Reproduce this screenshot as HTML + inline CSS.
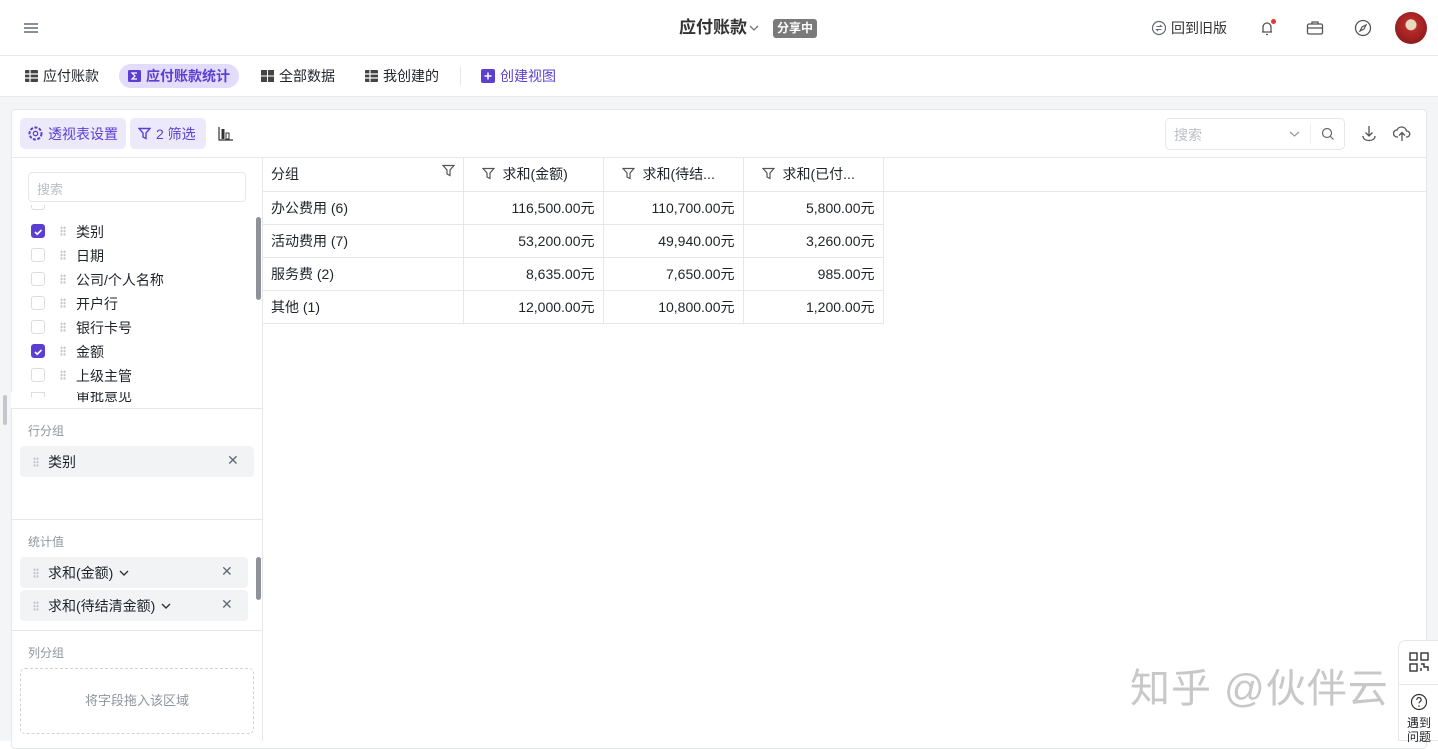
<!DOCTYPE html>
<html><head><meta charset="utf-8"><style>
*{box-sizing:border-box;margin:0;padding:0}
body{width:1438px;height:741px;overflow:hidden;background:#fff;font-family:"Liberation Sans","Noto Sans CJK SC",sans-serif;color:#1f2329;font-size:14px;position:relative}
.abs{position:absolute}
.top{left:0;top:0;width:1438px;height:56px;border-bottom:1px solid #e8e9eb;background:#fff}
.tabs{left:0;top:56px;width:1438px;height:41px;border-bottom:1px solid #e8e9eb;background:#fff}
.tab{position:absolute;top:8px;height:24px;line-height:24px;font-size:14px;color:#1f2329;display:flex;align-items:center;gap:5px}
.gray{left:0;top:97px;width:1438px;height:644px;background:#f4f5f7}
.card{left:11px;top:109px;width:1416px;height:640px;background:#fff;border:1px solid #e6e7ea;border-radius:4px}
.btn{position:absolute;top:118px;height:31px;border-radius:5px;background:#ece9fb;color:#5b3fd1;font-size:14px;display:flex;align-items:center;padding:0 8px;gap:5px}
.cb{position:absolute;left:31px;width:14px;height:14px;border:1px solid #dcdde0;border-radius:3px;background:#fff}
.cb.on{background:#5b3fd1;border-color:#5b3fd1}
.fl{position:absolute;left:76px;font-size:14px}
.dots{position:absolute;left:60px;width:6px;height:10px;background-image:radial-gradient(#c4c6cc 1px,transparent 1.2px);background-size:3px 3.4px}
.sec{position:absolute;left:28px;font-size:12px;color:#8f959e}
.chip{position:absolute;left:20px;height:31px;background:#f2f3f5;border-radius:4px;font-size:14px;display:flex;align-items:center;padding-left:28px}
.x{position:absolute;color:#646a73;font-size:14px}
table{border-collapse:collapse;position:absolute;left:263px;top:158px}
td{height:33px;border-right:1px solid #e6e7ea;border-bottom:1px solid #e6e7ea;padding:0 8px;font-size:14px}
td.n{text-align:right}
</style></head><body>
<div class="abs top"></div>
<svg class="abs" style="left:23px;top:21px" width="16" height="14"><path d="M1 3h14M1 7h14M1 11h14" stroke="#646a73" stroke-width="1.5"/></svg>
<div class="abs" style="left:679px;top:17px;font-size:17px;font-weight:bold;color:#333;line-height:22px">应付账款</div>
<svg class="abs" style="left:749px;top:24px" width="10" height="8"><path d="M1 2l4 4 4-4" stroke="#777" fill="none" stroke-width="1.3"/></svg>
<div class="abs" style="left:773px;top:19px;width:44px;height:19px;background:#7a7a7a;border-radius:3px;color:#fff;font-size:12px;line-height:19px;text-align:center;font-weight:bold">分享中</div>
<svg class="abs" style="left:1151px;top:20px" width="16" height="16"><circle cx="8" cy="8" r="6.5" stroke="#646a73" fill="none" stroke-width="1.2"/><path d="M5.5 6.5h5l-1.5-1.5M10.5 9.5h-5l1.5 1.5" stroke="#646a73" fill="none" stroke-width="1"/></svg>
<div class="abs" style="left:1171px;top:18px;font-size:14px;color:#333">回到旧版</div>
<svg class="abs" style="left:1258px;top:18px" width="20" height="20"><path d="M4 14h10M5 14V9a4 4 0 018 0v5M8 16.5h2" stroke="#555" fill="none" stroke-width="1.3"/><circle cx="15.5" cy="3.5" r="2.5" fill="#e33"/></svg>
<svg class="abs" style="left:1306px;top:20px" width="18" height="16"><rect x="1.5" y="4" width="15" height="10" rx="1.5" stroke="#555" fill="none" stroke-width="1.3"/><path d="M6 4V2h6v2M1.5 8h15" stroke="#555" fill="none" stroke-width="1.3"/></svg>
<svg class="abs" style="left:1354px;top:19px" width="18" height="18"><circle cx="9" cy="9" r="7.5" stroke="#555" fill="none" stroke-width="1.3"/><path d="M12 6l-2 4-4 2 2-4z" stroke="#555" fill="none" stroke-width="1.2"/></svg>
<div class="abs" style="left:1395px;top:12px;width:32px;height:32px;border-radius:50%;background:radial-gradient(circle at 50% 40%,#e9d9c0 0 5px,#b82a2a 6px,#7a1515)"></div>

<div class="abs tabs"></div>
<div class="tab" style="left:25px;top:64px"><svg width="13" height="12"><rect width="13" height="12" rx="1" fill="#444"/><path d="M5 0v12M0 4h13M0 8h13" stroke="#fff" stroke-width="1.2"/></svg>应付账款</div>
<div class="tab" style="left:119px;top:64px;background:#e3dcfb;border-radius:12px;padding:0 9px;color:#5b3fd1;font-weight:bold"><svg width="13" height="12"><rect width="13" height="12" rx="1.5" fill="#5b3fd1"/><path d="M9 3H4l3 3-3 3h5" stroke="#fff" fill="none" stroke-width="1.2"/></svg>应付账款统计</div>
<div class="tab" style="left:261px;top:64px"><svg width="13" height="12"><rect width="6" height="5.5" fill="#444"/><rect x="7" width="6" height="5.5" fill="#444"/><rect y="6.5" width="6" height="5.5" fill="#444"/><rect x="7" y="6.5" width="6" height="5.5" fill="#444"/></svg>全部数据</div>
<div class="tab" style="left:365px;top:64px"><svg width="13" height="12"><rect width="13" height="12" rx="1" fill="#444"/><path d="M5 0v12M0 4h13M0 8h13" stroke="#fff" stroke-width="1.2"/></svg>我创建的</div>
<div class="abs" style="left:460px;top:66px;width:1px;height:20px;background:#e6e7ea"></div>
<div class="tab" style="left:481px;top:64px;color:#5b3fd1"><svg width="14" height="14"><rect width="14" height="14" rx="2" fill="#5b3fd1"/><path d="M7 3.5v7M3.5 7h7" stroke="#fff" stroke-width="1.5"/></svg>创建视图</div>

<div class="abs gray"></div>
<div class="abs card"></div>
<div class="btn" style="left:20px;width:106px"><svg width="15" height="15"><circle cx="7.5" cy="7.5" r="6" stroke="#5b3fd1" fill="none" stroke-width="2" stroke-dasharray="3 1.5"/><circle cx="7.5" cy="7.5" r="2.2" stroke="#5b3fd1" fill="none" stroke-width="1.3"/></svg>透视表设置</div>
<div class="btn" style="left:130px;width:76px"><svg width="13" height="13"><path d="M1 1.5h11L8 6v5.5L5 10V6z" stroke="#5b3fd1" fill="none" stroke-width="1.4"/></svg>2 筛选</div>
<svg class="abs" style="left:218px;top:126px" width="16" height="15"><path d="M1 1v13h14" stroke="#333" fill="none" stroke-width="1.2"/><rect x="3.5" y="3" width="3" height="10" fill="#333"/><rect x="8" y="7" width="3" height="6" stroke="#333" fill="none"/></svg>
<div class="abs" style="left:1165px;top:118px;width:180px;height:32px;border:1px solid #e6e7ea;border-radius:5px"></div>
<div class="abs" style="left:1174px;top:125px;color:#bbbfc4;font-size:14px">搜索</div>
<svg class="abs" style="left:1289px;top:130px" width="11" height="8"><path d="M1 2l4.5 4L10 2" stroke="#999" fill="none" stroke-width="1.2"/></svg>
<div class="abs" style="left:1310px;top:124px;width:1px;height:20px;background:#eee"></div>
<svg class="abs" style="left:1321px;top:127px" width="14" height="14"><circle cx="6" cy="6" r="4.5" stroke="#666" fill="none" stroke-width="1.2"/><path d="M9.5 9.5l3 3" stroke="#666" stroke-width="1.2"/></svg>
<svg class="abs" style="left:1361px;top:125px" width="16" height="17"><path d="M8 1v10M4.5 7.5L8 11l3.5-3.5M2 11c0 3 2.5 4.5 6 4.5s6-1.5 6-4.5" stroke="#555" fill="none" stroke-width="1.3"/></svg>
<svg class="abs" style="left:1393px;top:125px" width="18" height="17"><path d="M5 12H4a3.5 3.5 0 010-7 5 5 0 019.5 1A3 3 0 0114 12h-1M9 16V8M6 10.5L9 7.5l3 3" stroke="#555" fill="none" stroke-width="1.3"/></svg>
<div class="abs" style="left:11px;top:157px;width:1416px;height:1px;background:#e6e7ea"></div>

<div class="abs" style="left:262px;top:157px;width:1px;height:584px;background:#e6e7ea"></div>
<div class="abs" style="left:28px;top:172px;width:218px;height:30px;border:1px solid #e6e7ea;border-radius:4px;color:#bbbfc4;font-size:13px;padding:6px 8px">搜索</div>
<div class="abs" style="left:256px;top:217px;width:5px;height:83px;background:#8f9399;border-radius:3px"></div>
<div class="abs" style="left:3px;top:395px;width:4px;height:30px;background:#c4c6cc;border-radius:2px"></div>
<div class="cb" style="top:205px;height:5px;border-top:none;border-radius:0 0 3px 3px"></div>
<div class="cb on" style="top:224px"><svg width="12" height="12"><path d="M3 6l2.2 2.2L9.5 4" stroke="#fff" fill="none" stroke-width="1.6"/></svg></div><div class="dots" style="top:226px"></div><div class="fl" style="top:222px">类别</div>
<div class="cb" style="top:248px"></div><div class="dots" style="top:250px"></div><div class="fl" style="top:246px">日期</div>
<div class="cb" style="top:272px"></div><div class="dots" style="top:274px"></div><div class="fl" style="top:270px">公司/个人名称</div>
<div class="cb" style="top:296px"></div><div class="dots" style="top:298px"></div><div class="fl" style="top:294px">开户行</div>
<div class="cb" style="top:320px"></div><div class="dots" style="top:322px"></div><div class="fl" style="top:318px">银行卡号</div>
<div class="cb on" style="top:344px"><svg width="12" height="12"><path d="M3 6l2.2 2.2L9.5 4" stroke="#fff" fill="none" stroke-width="1.6"/></svg></div><div class="dots" style="top:346px"></div><div class="fl" style="top:342px">金额</div>
<div class="cb" style="top:368px"></div><div class="dots" style="top:370px"></div><div class="fl" style="top:366px">上级主管</div>
<div class="abs" style="left:11px;top:392px;width:251px;height:16px;overflow:hidden;background:#fff"><div style="position:absolute;left:20px;top:0;width:14px;height:5px;border:1px solid #dcdde0;border-bottom:none"></div><div style="position:absolute;left:65px;top:-6px;font-size:14px">审批意见</div></div>
<div class="abs" style="left:11px;top:408px;width:251px;height:1px;background:#e6e7ea"></div>
<div class="sec" style="top:422px">行分组</div>
<div class="chip" style="top:446px;width:234px"><div class="dots" style="left:13px;top:11px"></div>类别<span class="x" style="left:207px;top:6px">✕</span></div>
<div class="abs" style="left:11px;top:519px;width:251px;height:1px;background:#e6e7ea"></div>
<div class="sec" style="top:533px">统计值</div>
<div class="abs" style="left:256px;top:557px;width:5px;height:43px;background:#8f9399;border-radius:3px"></div>
<div class="chip" style="top:557px;width:228px"><div class="dots" style="left:13px;top:11px"></div>求和(金额) <svg style="margin-left:6px" width="10" height="8"><path d="M1 2l4 4 4-4" stroke="#333" fill="none" stroke-width="1.4"/></svg><span class="x" style="left:201px;top:6px">✕</span></div>
<div class="chip" style="top:590px;width:228px"><div class="dots" style="left:13px;top:11px"></div>求和(待结清金额) <svg style="margin-left:6px" width="10" height="8"><path d="M1 2l4 4 4-4" stroke="#333" fill="none" stroke-width="1.4"/></svg><span class="x" style="left:201px;top:6px">✕</span></div>
<div class="abs" style="left:11px;top:630px;width:251px;height:1px;background:#e6e7ea"></div>
<div class="sec" style="top:644px">列分组</div>
<div class="abs" style="left:20px;top:668px;width:234px;height:66px;border:1px dashed #d0d3d6;border-radius:5px;text-align:center;line-height:64px;color:#8f959e;font-size:13px">将字段拖入该区域</div>

<div class="abs" style="left:263px;top:158px;width:1164px;height:34px;border-bottom:1px solid #e6e7ea"></div>
<table>
<tr><td style="width:200px;height:33px">分组<svg style="float:right" width="13" height="13"><path d="M1 1.5h11L8 6v5.5L5 10V6z" stroke="#555" fill="none" stroke-width="1.2"/></svg></td>
<td style="width:140px;padding-left:18px"><svg width="13" height="13" style="vertical-align:-1px;margin-right:8px"><path d="M1 1.5h11L8 6v5.5L5 10V6z" stroke="#555" fill="none" stroke-width="1.2"/></svg>求和(金额)</td>
<td style="width:140px;padding-left:18px"><svg width="13" height="13" style="vertical-align:-1px;margin-right:8px"><path d="M1 1.5h11L8 6v5.5L5 10V6z" stroke="#555" fill="none" stroke-width="1.2"/></svg>求和(待结...</td>
<td style="width:140px;padding-left:18px"><svg width="13" height="13" style="vertical-align:-1px;margin-right:8px"><path d="M1 1.5h11L8 6v5.5L5 10V6z" stroke="#555" fill="none" stroke-width="1.2"/></svg>求和(已付...</td></tr>
<tr><td style="height:32px">办公费用 (6)</td><td class="n">116,500.00元</td><td class="n">110,700.00元</td><td class="n">5,800.00元</td></tr>
<tr><td style="height:32px">活动费用 (7)</td><td class="n">53,200.00元</td><td class="n">49,940.00元</td><td class="n">3,260.00元</td></tr>
<tr><td style="height:32px">服务费 (2)</td><td class="n">8,635.00元</td><td class="n">7,650.00元</td><td class="n">985.00元</td></tr>
<tr><td style="height:32px">其他 (1)</td><td class="n">12,000.00元</td><td class="n">10,800.00元</td><td class="n">1,200.00元</td></tr>
</table>

<div class="abs" style="left:1130px;top:656px;font-size:40px;color:#c8c8c8;letter-spacing:1px">知乎 @伙伴云</div>
<div class="abs" style="left:1398px;top:640px;width:40px;height:101px;background:#fff;border:1px solid #e6e7ea;border-right:none;border-radius:8px 0 0 0"></div>
<svg class="abs" style="left:1409px;top:652px" width="20" height="20"><rect x="1" y="1" width="7" height="7" stroke="#333" fill="none" stroke-width="1.4"/><rect x="12" y="1" width="7" height="7" stroke="#333" fill="none" stroke-width="1.4"/><rect x="1" y="12" width="7" height="7" stroke="#333" fill="none" stroke-width="1.4"/><path d="M12 12h3v3h4v4M12 16v3" stroke="#333" fill="none" stroke-width="1.4"/></svg>
<div class="abs" style="left:1399px;top:684px;width:39px;height:1px;background:#e6e7ea"></div>
<svg class="abs" style="left:1410px;top:693px" width="18" height="18"><circle cx="9" cy="9" r="7.5" stroke="#333" fill="none" stroke-width="1.2"/><path d="M6.8 7a2.2 2.2 0 114 1c-.8.7-1.8 1-1.8 2.3" stroke="#333" fill="none" stroke-width="1.2"/><circle cx="9" cy="13" r=".8" fill="#333"/></svg>
<div class="abs" style="left:1407px;top:716px;font-size:12px;line-height:14px;width:26px">遇到问题</div>
</body></html>
